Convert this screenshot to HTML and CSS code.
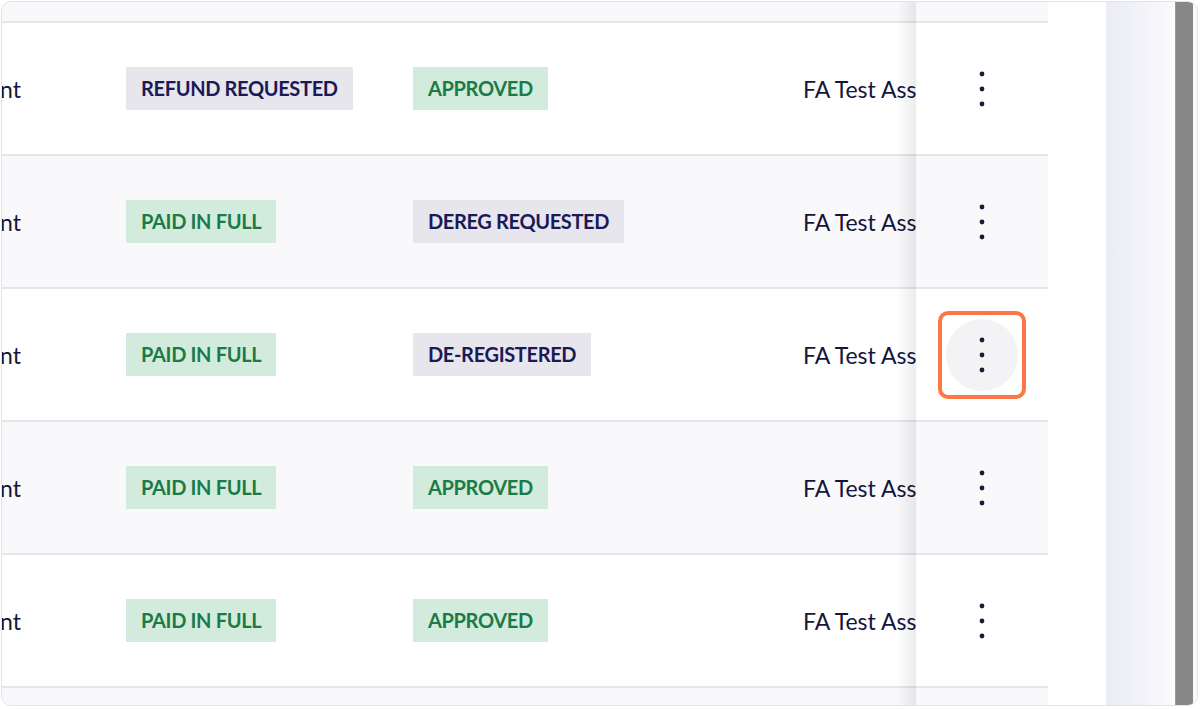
FILE: index.html
```html
<!DOCTYPE html>
<html lang="en">
<head>
<meta charset="utf-8">
<title>Registrations</title>
<link rel="stylesheet" href="styles.css">
</head>
<body>
<div class="frame">
  <div class="table-wrap">
    <div class="row row-partial row-alt">
      <div class="cell tail"></div><div class="cell"></div><div class="cell"></div><div class="cell"></div><div class="cell sticky"></div>
    </div>

    <div class="row">
      <div class="cell tail"><span>Payment</span></div>
      <div class="cell"><span class="badge badge-grey">REFUND REQUESTED</span></div>
      <div class="cell"><span class="badge badge-green">APPROVED</span></div>
      <div class="cell name"><span>FA Test Assistant</span></div>
      <div class="cell sticky"><button class="kebab" aria-label="More actions"><svg width="6" height="36" viewBox="0 0 6 36"><circle cx="3" cy="3" r="2.4"/><circle cx="3" cy="18" r="2.4"/><circle cx="3" cy="33" r="2.4"/></svg></button></div>
    </div>

    <div class="row row-alt">
      <div class="cell tail"><span>Payment</span></div>
      <div class="cell"><span class="badge badge-green">PAID IN FULL</span></div>
      <div class="cell"><span class="badge badge-grey">DEREG REQUESTED</span></div>
      <div class="cell name"><span>FA Test Assistant</span></div>
      <div class="cell sticky"><button class="kebab" aria-label="More actions"><svg width="6" height="36" viewBox="0 0 6 36"><circle cx="3" cy="3" r="2.4"/><circle cx="3" cy="18" r="2.4"/><circle cx="3" cy="33" r="2.4"/></svg></button></div>
    </div>

    <div class="row">
      <div class="cell tail"><span>Payment</span></div>
      <div class="cell"><span class="badge badge-green">PAID IN FULL</span></div>
      <div class="cell"><span class="badge badge-grey">DE-REGISTERED</span></div>
      <div class="cell name"><span>FA Test Assistant</span></div>
      <div class="cell sticky"><button class="kebab kebab-active" aria-label="More actions"><svg width="6" height="36" viewBox="0 0 6 36"><circle cx="3" cy="3" r="2.4"/><circle cx="3" cy="18" r="2.4"/><circle cx="3" cy="33" r="2.4"/></svg></button></div>
    </div>

    <div class="row row-alt">
      <div class="cell tail"><span>Payment</span></div>
      <div class="cell"><span class="badge badge-green">PAID IN FULL</span></div>
      <div class="cell"><span class="badge badge-green">APPROVED</span></div>
      <div class="cell name"><span>FA Test Assistant</span></div>
      <div class="cell sticky"><button class="kebab" aria-label="More actions"><svg width="6" height="36" viewBox="0 0 6 36"><circle cx="3" cy="3" r="2.4"/><circle cx="3" cy="18" r="2.4"/><circle cx="3" cy="33" r="2.4"/></svg></button></div>
    </div>

    <div class="row">
      <div class="cell tail"><span>Payment</span></div>
      <div class="cell"><span class="badge badge-green">PAID IN FULL</span></div>
      <div class="cell"><span class="badge badge-green">APPROVED</span></div>
      <div class="cell name"><span>FA Test Assistant</span></div>
      <div class="cell sticky"><button class="kebab" aria-label="More actions"><svg width="6" height="36" viewBox="0 0 6 36"><circle cx="3" cy="3" r="2.4"/><circle cx="3" cy="18" r="2.4"/><circle cx="3" cy="33" r="2.4"/></svg></button></div>
    </div>

    <div class="row row-partial row-last row-alt">
      <div class="cell tail"></div><div class="cell"></div><div class="cell"></div><div class="cell"></div><div class="cell sticky"></div>
    </div>

    <div class="sticky-shadow"></div>
  </div>
  <div class="gap"></div>
  <div class="side-panel"></div>
  <div class="scrollbar"></div>
  <div class="scroll-rest"></div>
</div>
</body>
</html>
```

FILE: styles.css
```css
* { box-sizing: border-box; }

html, body {
  margin: 0;
  padding: 0;
  background: #ffffff;
}

body {
  padding: 1px 0 0 1px;
  font-family: Lato, "Open Sans", sans-serif;
  color: #15153a;
}

.frame {
  width: 1197px;
  height: 705px;
  border: 1px solid #e3e3e9;
  border-radius: 10px;
  overflow: hidden;
  display: flex;
  background: #ffffff;
}

.table-wrap {
  position: relative;
  width: 1046px;
  flex: none;
  display: flex;
  flex-direction: column;
}

.row {
  display: grid;
  grid-template-columns: 124px 287px 390px 113px 132px;
  height: 133px;
  flex: none;
  border-bottom: 2px solid #e5e5ea;
  background: #ffffff;
}

.row-alt { background: #f9f9fb; }

.row-partial { height: 21px; }
.row-last { height: auto; flex: 1; border-bottom: 0; }

.cell {
  display: flex;
  align-items: center;
  min-width: 0;
}

.tail {
  justify-content: flex-end;
  overflow: hidden;
  padding-right: 105px;
  white-space: nowrap;
  font-size: 23px;
}

.name {
  overflow: hidden;
  white-space: nowrap;
  font-size: 23px;
}

.sticky {
  justify-content: center;
  background: inherit;
}

.badge {
  display: inline-flex;
  align-items: center;
  height: 43px;
  padding: 0 15px 2px;
  font-size: 20px;
  font-weight: 700;
  letter-spacing: -0.35px;
  white-space: nowrap;
}

.badge-grey {
  background: #e6e6ec;
  color: #1b1a57;
}

.badge-green {
  background: #d3ebdd;
  color: #1a7b48;
}

.kebab {
  position: relative;
  width: 72px;
  height: 72px;
  border: 0;
  border-radius: 50%;
  background: transparent;
  padding: 0;
  display: flex;
  align-items: center;
  justify-content: center;
  fill: #1a1a3a;
  cursor: pointer;
}

.kebab-active { background: #f3f3f5; }

.kebab-active::after {
  content: "";
  position: absolute;
  inset: -8px;
  border: 4px solid #ff7646;
  border-radius: 10px;
}

.sticky-shadow {
  position: absolute;
  top: 0;
  bottom: 0;
  left: 894px;
  width: 20px;
  background: linear-gradient(to right, rgba(0,0,0,0), rgba(0,0,0,0.08));
  pointer-events: none;
}

.gap {
  width: 58px;
  flex: none;
  background: #ffffff;
}

.side-panel {
  width: 69px;
  flex: none;
  background: linear-gradient(to right, #ebebf5, #f3f3f9 55%, #fbfbfd);
}

.scrollbar {
  width: 18px;
  flex: none;
  background: #878787;
  border-left: 1px solid #9a9a9a;
}

.scroll-rest {
  flex: 1;
  background: #fafafb;
}
```
